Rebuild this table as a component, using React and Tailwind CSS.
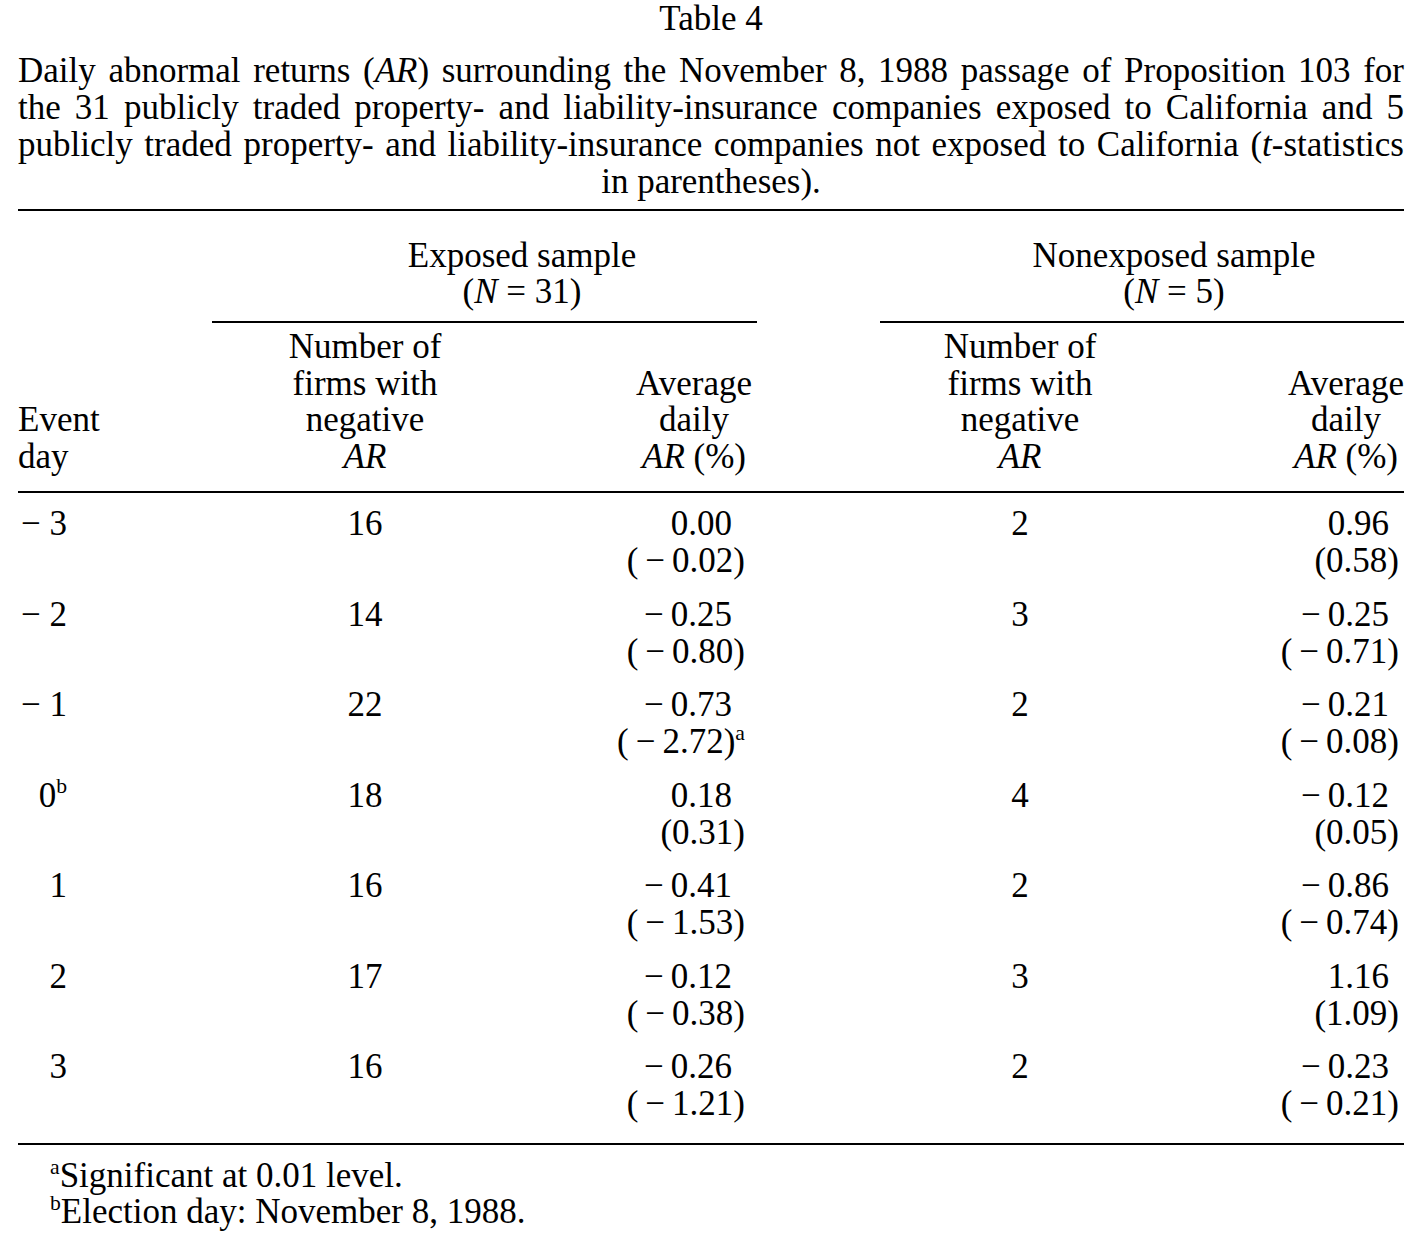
import React from 'react';

const cols = 'grid grid-cols-[194px_306px_239px_123px_280px_244px]';

const rows = [
  { day: '−\u00a03', n1: '16', v1: '0.00', t1: '(\u2009−\u20090.02)', n2: '2', v2: '0.96', t2: '(0.58)' },
  { day: '−\u00a02', n1: '14', v1: '−\u20090.25', t1: '(\u2009−\u20090.80)', n2: '3', v2: '−\u20090.25', t2: '(\u2009−\u20090.71)' },
  { day: '−\u00a01', n1: '22', v1: '−\u20090.73', t1: '(\u2009−\u20092.72)', sup1: 'a', n2: '2', v2: '−\u20090.21', t2: '(\u2009−\u20090.08)' },
  { day: '0', daySup: 'b', n1: '18', v1: '0.18', t1: '(0.31)', n2: '4', v2: '−\u20090.12', t2: '(0.05)' },
  { day: '1', n1: '16', v1: '−\u20090.41', t1: '(\u2009−\u20091.53)', n2: '2', v2: '−\u20090.86', t2: '(\u2009−\u20090.74)' },
  { day: '2', n1: '17', v1: '−\u20090.12', t1: '(\u2009−\u20090.38)', n2: '3', v2: '1.16', t2: '(1.09)' },
  { day: '3', n1: '16', v1: '−\u20090.26', t1: '(\u2009−\u20091.21)', n2: '2', v2: '−\u20090.23', t2: '(\u2009−\u20090.21)' },
];

const Rule = ({ className = '' }) => <div className={`border-t-2 border-black ${className}`} />;

const Justified = ({ children }) => (
  <div className="text-justify [text-align-last:justify]">{children}</div>
);

const GroupHeader = ({ title, n, pad }) => (
  <div className="col-span-2 leading-[36px]">
    <div className={`text-center ${pad}`}>{title}</div>
    <div className={`text-center ${pad}`}>
      (<i>N</i> = {n})
    </div>
    <Rule className="mt-[11px]" />
  </div>
);

const NumberHeader = () => (
  <div className="text-center">
    <div>Number of</div>
    <div>firms with</div>
    <div>negative</div>
    <div>
      <i>AR</i>
    </div>
  </div>
);

const AverageHeader = ({ pad }) => (
  <div className={`self-end flex justify-end ${pad}`}>
    <div className="text-center">
      <div>Average</div>
      <div>daily</div>
      <div>
        <i>AR</i> (%)
      </div>
    </div>
  </div>
);

export default function App() {
  return (
    <div className="min-h-screen bg-white text-black font-['Liberation_Serif',serif] text-[35px]">
      <div className="w-[1386px] ml-[18px]">
        <div className="text-center leading-[37px]">Table 4</div>

        <div className="mt-[15px] leading-[37px]">
          <Justified>
            Daily abnormal returns (<i>AR</i>) surrounding the November 8, 1988 passage of Proposition 103 for
          </Justified>
          <Justified>
            the 31 publicly traded property- and liability-insurance companies exposed to California and 5
          </Justified>
          <Justified>
            publicly traded property- and liability-insurance companies not exposed to California (<i>t</i>-statistics
          </Justified>
          <div className="text-center">in parentheses).</div>
        </div>

        <Rule className="mt-[9px]" />

        {/* group headers */}
        <div className={`${cols} pt-[27px]`}>
          <div />
          <GroupHeader title="Exposed sample" n="31" pad="pl-[75px]" />
          <div />
          <GroupHeader title="Nonexposed sample" n="5" pad="pl-[64px]" />
        </div>

        {/* column headers */}
        <div className={`${cols} pt-[6px] leading-[36.5px]`}>
          <div className="self-end">
            <div>Event</div>
            <div>day</div>
          </div>
          <NumberHeader />
          <AverageHeader pad="pr-[5px]" />
          <div />
          <NumberHeader />
          <AverageHeader pad="pr-0" />
        </div>

        <Rule className="mt-[16px]" />

        {/* data */}
        <div className="pt-[12px] flex flex-col gap-[16.5px] leading-[37px]">
          {rows.map((r, i) => (
            <div key={i} className={cols}>
              <div className="w-[49px] text-right">
                {r.day}
                {r.daySup && <sup className="text-[0.62em] top-[-0.6em]">{r.daySup}</sup>}
              </div>
              <div className="text-center">{r.n1}</div>
              <div className="text-right">
                <div className="pr-[25px]">{r.v1}</div>
                <div className="pr-[12px]">
                  {r.t1}
                  {r.sup1 && <sup className="text-[0.62em] top-[-0.6em]">{r.sup1}</sup>}
                </div>
              </div>
              <div />
              <div className="text-center">{r.n2}</div>
              <div className="text-right">
                <div className="pr-[15px]">{r.v2}</div>
                <div className="pr-[5px]">{r.t2}</div>
              </div>
            </div>
          ))}
        </div>

        <Rule className="mt-[21px]" />

        <div className="pt-[13px] pl-[32px] leading-[36px]">
          <div>
            <sup className="text-[0.62em] top-[-0.6em]">a</sup>Significant at 0.01 level.
          </div>
          <div>
            <sup className="text-[0.62em] top-[-0.6em]">b</sup>Election day: November 8, 1988.
          </div>
        </div>
      </div>
    </div>
  );
}
